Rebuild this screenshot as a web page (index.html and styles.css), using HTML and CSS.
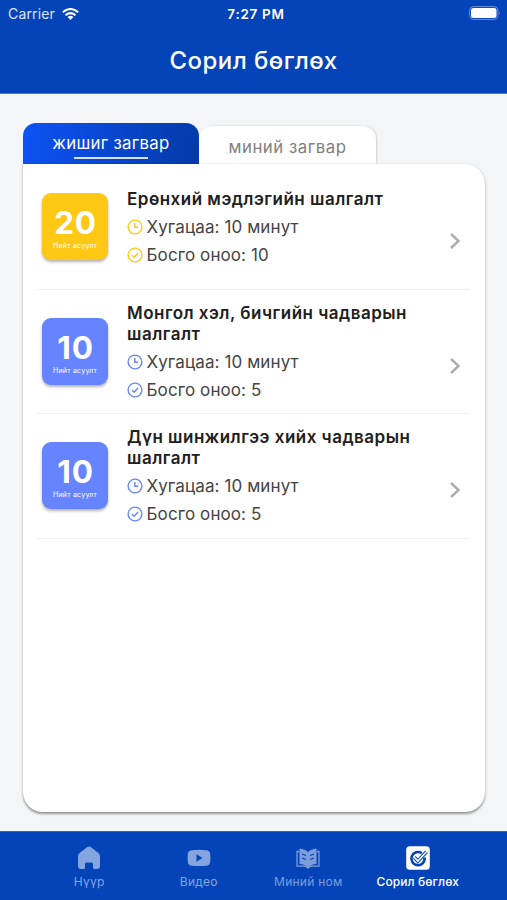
FILE: index.html
```html
<!DOCTYPE html>
<html lang="mn">
<head>
<meta charset="utf-8">
<title>Сорил бөглөх</title>
<link rel="stylesheet" href="styles.css">
</head>
<body>
<svg class="defs" aria-hidden="true">
  <symbol id="clock" viewBox="0 0 16 16"><circle cx="8" cy="8" r="6.9"/><path d="M7.8 4v4.3h3.4"/></symbol>
  <symbol id="check" viewBox="0 0 16 16"><circle cx="8" cy="8" r="6.9"/><path d="M5 8.2l2.1 2 4-4.2"/></symbol>
  <symbol id="chevron" viewBox="0 0 12 18"><path d="M2 2l7.500 7L2 16"/></symbol>
</svg>
<div class="app">
  <header class="header">
    <div class="status">
      <div class="carrier"><span class="carrier-name">Carrier</span>
        <svg class="wifi" viewBox="0 0 17 12"><g fill="none" stroke="#fff" stroke-width="2"><path d="M.8 4.3Q8.500-2.300 16.200 4.300"/><path d="M3.500 7.200Q8.500 3 13.500 7.200"/></g><path fill="#fff" d="M5.600 9Q8.500 6.700 11.400 9L8.500 12z"/></svg>
      </div>
      <span class="time">7:27 PM</span>
      <svg class="battery" viewBox="0 0 32 14"><rect x=".6" y=".6" width="28.300" height="12.800" rx="3.800" fill="none" stroke="#6d91d8"/><rect x="2" y="2" width="25.500" height="10" rx="2.300" fill="#fff"/><path d="M30.300 5q1.400 2 0 4z" fill="#6d91d8"/></svg>
    </div>
    <h1 class="title"><span>Сорил бөглөх</span></h1>
  </header>
  <main class="main">
    <nav class="tabs">
      <div class="tab tab-active"><span>жишиг загвар</span></div>
      <div class="tab tab-idle"><span>миний загвар</span></div>
    </nav>
    <section class="panel">
      <article class="row yellow">
        <div class="badge"><b>20</b><small>Нийт асуулт</small></div>
        <div class="info">
          <h2><span>Ерөнхий мэдлэгийн шалгалт</span></h2>
          <p><svg><use href="#clock"/></svg><span>Хугацаа: 10 минут</span></p>
          <p><svg><use href="#check"/></svg><span>Босго оноо: 10</span></p>
        </div>
        <svg class="chevron"><use href="#chevron"/></svg>
      </article>
      <article class="row">
        <div class="badge"><b>10</b><small>Нийт асуулт</small></div>
        <div class="info">
          <h2><span>Монгол хэл, бичгийн чадварын</span><br>шалгалт</h2>
          <p><svg><use href="#clock"/></svg><span>Хугацаа: 10 минут</span></p>
          <p><svg><use href="#check"/></svg><span>Босго оноо: 5</span></p>
        </div>
        <svg class="chevron"><use href="#chevron"/></svg>
      </article>
      <article class="row">
        <div class="badge"><b>10</b><small>Нийт асуулт</small></div>
        <div class="info">
          <h2><span>Дүн шинжилгээ хийх чадварын</span><br>шалгалт</h2>
          <p><svg><use href="#clock"/></svg><span>Хугацаа: 10 минут</span></p>
          <p><svg><use href="#check"/></svg><span>Босго оноо: 5</span></p>
        </div>
        <svg class="chevron"><use href="#chevron"/></svg>
      </article>
    </section>
  </main>
  <footer class="bar">
    <div class="item"><svg viewBox="0 0 24 24"><path d="M10.300 1.100q1.700-1.200 3.400 0l7.400 5.600q1.900 1.400 1.900 3.700v9.300q0 3.300-3.300 3.300H17.500q-1.500 0-1.500-1.500V18q0-1.500-1.500-1.500h-5Q8 16.500 8 18v3.500Q8 23 6.500 23H4.300Q1 23 1 19.700v-9.300Q1 8.100 2.900 6.700z"/></svg><span>Нүүр</span></div>
    <div class="item"><svg viewBox="0 0 24 24"><path fill-rule="evenodd" d="M5 4.200Q12 3.500 19 4.200q3.800.3 4.200 3.800.4 4 0 8-.4 3.500-4.200 3.800-7 .5-14 0Q1.200 19.500.800 16q-.4-4 0-8Q1.200 4.500 5 4.200zM9.500 8.200v7.600l6-3.800z"/></svg><span>Видео</span></div>
    <div class="item dim"><svg viewBox="0 0 24 24"><path d="M3.500 2.500Q9 3 12 6.200 15 3 20.500 2.500v15.500Q15.500 18 12 21.500 8.500 18 3.500 18z"/><path d="M3 5.500H1v14.700h7q2.500.1 4 1.900 1.500-1.800 4-1.900h7V5.500h-2" fill="none" stroke="#7c9edc" stroke-width="1.300"/><path d="M6 8l4 1.500M6 12l4 1.500M14 9.500l4-1.500M14 13.500l4-1.500" fill="none" stroke="#0544b8" stroke-width="1.300"/></svg><span>Миний ном</span></div>
    <div class="item on"><svg viewBox="0 0 24 24"><rect x=".2" y=".2" width="23.600" height="23.600" rx="3.500"/><path d="M15.800 7.200A6.600 6.600 0 1 0 18.500 11.500" fill="none" stroke="#0544b8" stroke-width="2.600"/><path d="M8.300 11.200l3.500 3.900 8.700-9.400" fill="none" stroke="#0544b8" stroke-width="3.600"/><path d="M8.300 11.200l3.500 3.900 8.700-9.400" fill="none" stroke="#fff" stroke-width="1.500"/></svg><span>Сорил бөглөх</span></div>
  </footer>
</div>
</body>
</html>
```
FILE: styles.css
```css
* { box-sizing: border-box; }
body { margin: 0; font-family: Inter, "Liberation Sans", sans-serif; }
h1, h2, p { margin: 0; }
.defs { display: none; }
.app { width: 507px; height: 900px; display: flex; flex-direction: column; background: #f3f5f7; overflow: hidden; }
.header { height: 94px; flex: none; background: #0544b8; color: #fff; border-bottom: 1px solid #4a76cb; }
.status { height: 28px; display: grid; grid-template-columns: 1fr auto 1fr; align-items: center; padding: 0 6px 0 8px; }
.carrier { display: flex; align-items: center; gap: 7px; font-size: 14px; line-height: 16px; margin-top: -1px; color: #dce6f8; letter-spacing: .15px; }
.wifi { width: 17px; height: 12px; }
.time { font-size: 13.5px; font-weight: 600; letter-spacing: .7px; margin-left: 3px; }
.battery { width: 32px; height: 14px; justify-self: end; margin-top: -2px; }
.title { height: 64px; line-height: 65px; text-align: center; font-size: 24px; font-weight: 500; letter-spacing: .45px; }
.main { flex: 1; padding: 29px 22px 0 23px; }
.tabs { display: flex; align-items: flex-end; height: 41px; }
.tab { text-align: center; letter-spacing: .5px; font-size: 16.8px; }
.tab-active { width: 176px; height: 41px; line-height: 40px; border-radius: 13px 13px 0 0; background: linear-gradient(100deg, #0d53f5, #033aa7); color: #fff; position: relative; }
.tab-active span { letter-spacing: .3px; }
.tab-active::after { content: ""; position: absolute; left: 51px; bottom: 5px; width: 74px; height: 2px; background: #d5e1fa; }
.tab-idle { width: 177px; height: 38px; line-height: 42px; border-radius: 13px 13px 0 0; background: #fff; color: #808080; box-shadow: 1px 0 2px rgba(0,0,0,.15); }
.panel { position: relative; height: 648px; background: #fff; border-radius: 0 20px 20px 20px; padding: 0 15px 0 13px; box-shadow: 0 1.500px 2.500px rgba(0,0,0,.4); }
.row { height: 124.500px; display: flex; align-items: center; border-bottom: 1px solid #f0f0f0; padding: 0 9px 0 6px; color: #6684ff; }
.row:first-child { height: 125.600px; padding-top: 1px; }
.badge { width: 66px; height: 67px; flex: none; border-radius: 9px; background: #6684ff; color: #fff; display: flex; flex-direction: column; align-items: center; padding-top: 16px; box-shadow: 0 2px 3px rgba(0,0,0,.3); }
.badge b { font-size: 31.500px; line-height: 27px; font-weight: 700; letter-spacing: .8px; margin-right: -1px; }
.badge small { font-size: 7px; line-height: 8px; margin-top: 6px; white-space: nowrap; letter-spacing: .25px; }
.yellow { color: #ffc815; }
.yellow .badge { background: #ffc815; }
.info { flex: 1; margin-left: 19px; }
.info h2 { height: auto; margin-top: 1px; margin-bottom: 3px; color: #202020; font-size: 17px; line-height: 21px; font-weight: 600; letter-spacing: .49px; white-space: nowrap; }
.info p:last-child { margin-bottom: -3px; }
.info p { height: 28px; display: flex; align-items: center; gap: 4px; font-size: 17px; letter-spacing: .1px; }
.info p span { color: #444; }
.info p svg { width: 16px; height: 16px; margin-left: -.5px; fill: none; stroke: currentColor; stroke-width: 1.400; }
.chevron { width: 12px; height: 18px; margin-top: 29px; fill: none; stroke: #adadad; stroke-width: 2.500; }
.bar { height: 69px; flex: none; background: #0544b8; border-top: 1px solid #2f62c3; display: grid; grid-template-columns: repeat(4, 109.500px); justify-content: center; }
.item { display: flex; flex-direction: column; align-items: center; padding-top: 14px; color: #85a5e0; font-size: 12px; line-height: 16px; letter-spacing: .25px; }
.item svg { width: 24px; height: 24px; fill: currentColor; margin-bottom: 4px; }
.dim { color: #7c9edc; }
.on { color: #fff; font-weight: 500; letter-spacing: .1px; }
```
